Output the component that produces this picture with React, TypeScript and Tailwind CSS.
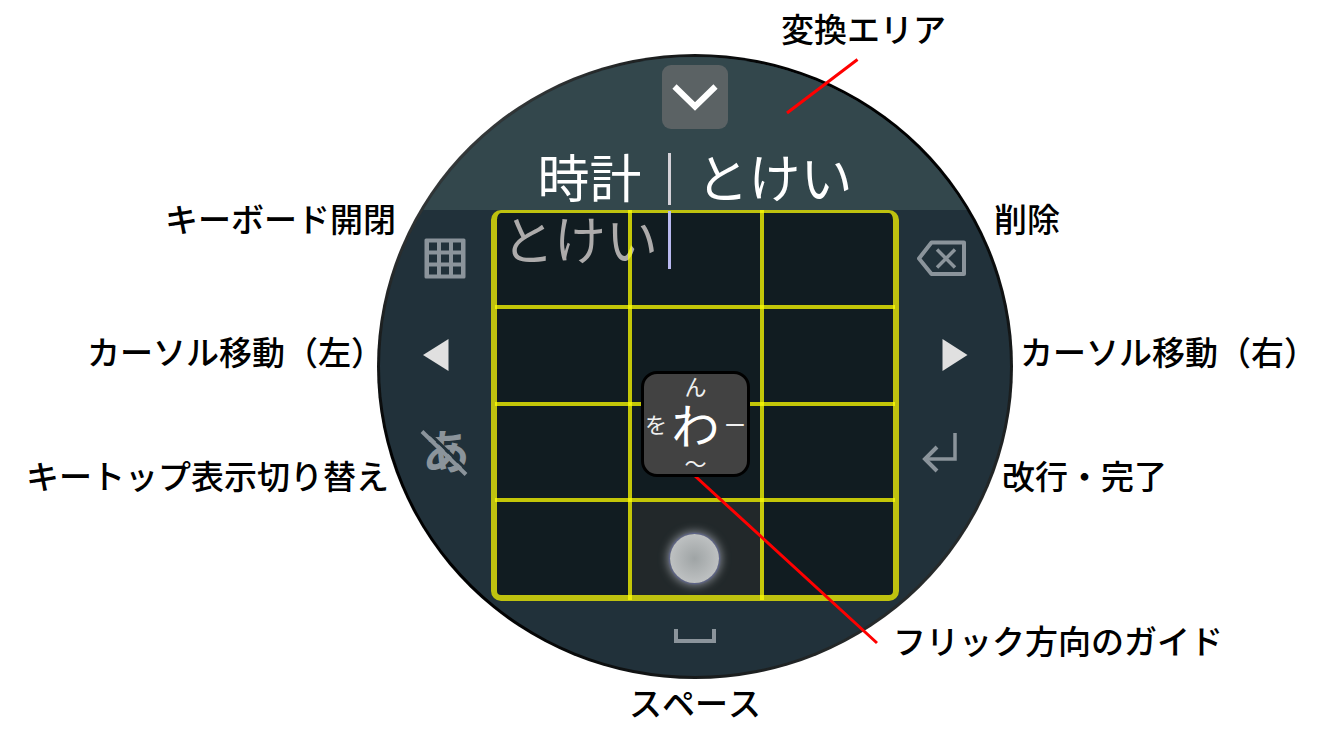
import type { ReactNode } from "react";

const KEYS = ["あ", "か", "さ", "た", "な", "は", "ま", "や", "ら", "記号", "わ", "句読点"];

const CALLOUTS = [
  { text: "変換エリア", place: "left-[404px] -top-[42px]" },
  { text: "キーボード開閉", place: "right-[617px] top-[148px]" },
  { text: "カーソル移動（左）", place: "right-[629px] top-[281px]" },
  { text: "キートップ表示切り替え", place: "right-[624px] top-[405px]" },
  { text: "削除", place: "left-[617px] top-[148px]" },
  { text: "カーソル移動（右）", place: "left-[643px] top-[281px]" },
  { text: "改行・完了", place: "left-[625px] top-[405px]" },
  { text: "フリック方向のガイド", place: "left-[516px] top-[570px]" },
  { text: "スペース", place: "left-[252px] top-[632px]" },
];

function SideKey({ label, children }: { label: string; children: ReactNode }) {
  return (
    <button type="button" aria-label={label} className="flex h-[97px] items-center justify-center">
      {children}
    </button>
  );
}

function LeftKeys() {
  return (
    <div className="flex w-[111px] flex-col pl-[19px]">
      <SideKey label="キーボード開閉">
        <svg viewBox="409 223 72 72" className="size-[72px]" fill="none">
          <rect x="424.5" y="238.5" width="41" height="40" rx="1.5" fill="#8b949b" />
          <g fill="#21313a">
            {[242.5, 254.5, 266.5].map((y) =>
              [429, 441, 453].map((x) => <rect key={`${x}-${y}`} x={x} y={y} width="8" height="8" />),
            )}
          </g>
        </svg>
      </SideKey>
      <SideKey label="カーソル移動（左）">
        <svg viewBox="409 320 72 72" className="size-[72px]">
          <path d="M423 355L448.500 339V371Z" fill="#e0e0e0" />
        </svg>
      </SideKey>
      <SideKey label="キートップ表示切り替え">
        <svg viewBox="405 413 80 80" className="size-[80px]">
          <text x="446" y="469" textAnchor="middle" fontSize="47" fontWeight="700" fill="#8b949b">
            あ
          </text>
          <path d="M424 428L469 472" stroke="#21313a" strokeWidth="3" />
          <path d="M422 431.500L466 474.500" stroke="#8b949b" strokeWidth="4" />
        </svg>
      </SideKey>
    </div>
  );
}

function RightKeys() {
  return (
    <div className="flex w-[111px] flex-col pr-[25px]">
      <SideKey label="削除">
        <svg viewBox="906 223 72 72" className="size-[72px]" fill="none" stroke="#8b949b">
          <path d="M931.500 242.500H964V274H931.500L919 258.500Z" strokeWidth="4" strokeLinejoin="round" />
          <path d="M937 249.500L955 267.500M955 249.500L937 267.500" strokeWidth="3.500" />
        </svg>
      </SideKey>
      <SideKey label="カーソル移動（右）">
        <svg viewBox="906 320 72 72" className="size-[72px]">
          <path d="M942.500 339L967.500 355L942.500 371Z" fill="#e0e0e0" />
        </svg>
      </SideKey>
      <SideKey label="改行・完了">
        <svg viewBox="906 417 72 72" className="size-[72px]" fill="none" stroke="#8b949b">
          <path d="M955 433V459H925" strokeWidth="3.500" />
          <path d="M937 447L925 459L937 471" strokeWidth="4" />
        </svg>
      </SideKey>
    </div>
  );
}

function FlickGuide() {
  return (
    <div className="absolute left-[144px] top-[158px] z-20 grid h-[106px] w-[109px] grid-cols-[24px_1fr_24px] grid-rows-[22px_1fr_24px] place-items-center rounded-2xl border-[3px] border-black bg-[#424242] text-[22px] leading-[22px] text-[#f0f0f0]">
      <span className="col-start-2">ん</span>
      <span className="col-start-1 row-start-2">を</span>
      <span className="col-start-2 row-start-2 text-[48px] leading-[48px] text-white">わ</span>
      <span className="col-start-3 row-start-2">ー</span>
      <span className="col-start-2 row-start-3">～</span>
    </div>
  );
}

function Keypad() {
  return (
    <div className="relative h-[391px] w-[408px] rounded-[10px] border-x-[6px] border-b-[6px] border-t-[3px] border-[#bfc20f] bg-[#111c21]">
      <div className="absolute left-[5px] -top-[4px] flex items-end text-[52px] leading-[58px] text-[#adabab]">
        <span>とけい</span>
        <span className="ml-[10px] -mb-[2px] h-[58px] w-[3px] bg-[#b9b9f0]" />
      </div>
      <div className="grid h-full grid-cols-[135px_132px_1fr] grid-rows-[96px_97px_96px_1fr]">
        {KEYS.map((key) => (
          <button
            key={key}
            type="button"
            aria-label={key}
            className={key === "わ" ? "flex items-end justify-center bg-[#22282a] pr-[8px] pb-[12px]" : ""}
          >
            {key === "わ" && (
              <span className="size-[49px] rounded-full bg-radial from-[#9fa4a5] to-[#cbcdce] shadow-[0_0_2px_1px_#5d6496,0_0_9px_3px_#7c8086]" />
            )}
          </button>
        ))}
      </div>
      <div aria-hidden="true" className="pointer-events-none absolute inset-x-0 -top-[3px] -bottom-[5px] grid grid-cols-[135px_132px_1fr]">
        <span className="border-r-4 border-[#ffff00]/75" />
        <span className="border-r-4 border-[#ffff00]/75" />
      </div>
      <div aria-hidden="true" className="pointer-events-none absolute -inset-x-[2px] inset-y-0 grid grid-rows-[96px_97px_96px_1fr]">
        <span className="border-b-4 border-[#ffff00]/75" />
        <span className="border-b-4 border-[#ffff00]/75" />
        <span className="border-b-4 border-[#ffff00]/75" />
      </div>
      <FlickGuide />
    </div>
  );
}

function Watch() {
  return (
    <div className="rounded-[50%] bg-linear-135 from-[#3c4142] from-12% via-black via-40% to-[#303536] to-92% p-[3px]">
      <div className="flex h-[619px] flex-col overflow-hidden rounded-[50%] bg-[#21313a]">
        <header className="flex h-[153px] flex-col items-center bg-[#33474c] pt-[8px]">
          <button
            type="button"
            aria-label="閉じる"
            className="flex h-[64px] w-[66px] items-center justify-center rounded-[9px] bg-[#5b6264]"
          >
            <svg viewBox="0 0 66 64" className="h-[64px] w-[66px]" fill="none">
              <path d="M12.500 21.500L33 41.500L53.500 21.500" stroke="#fff" strokeWidth="6" />
            </svg>
          </button>
          <div className="mt-[18px] flex items-center gap-[26px] text-[52px] leading-[52px] text-white">
            <button type="button">時計</button>
            <span className="mt-[6px] h-[52px] w-[3px] bg-[#d5d2d8]" />
            <button type="button">とけい</button>
          </div>
        </header>
        <div className="flex">
          <LeftKeys />
          <Keypad />
          <RightKeys />
        </div>
        <button type="button" aria-label="スペース" className="flex h-[70px] items-center justify-center">
          <svg viewBox="0 0 42 14" className="h-[14px] w-[42px]" fill="none">
            <path d="M2 0V12H40V0" stroke="#8b949b" strokeWidth="4" />
          </svg>
        </button>
      </div>
    </div>
  );
}

export default function App() {
  return (
    <main
      lang="ja"
      className="flex min-h-screen justify-center bg-white pt-[54px] pl-[50px] font-['Noto_Sans_CJK_JP','Noto_Sans',sans-serif]"
    >
      <figure className="relative w-[636px]">
        <Watch />
        <svg aria-hidden="true" viewBox="377 54 636 625" className="pointer-events-none absolute left-0 top-0 h-[625px] w-[636px] overflow-visible">
          <path d="M857.500 59.500L787 113M695 476L877 643" stroke="#f00" strokeWidth="3" />
        </svg>
        <figcaption>
          {CALLOUTS.map(({ text, place }) => (
            <span
              key={text}
              className={`absolute whitespace-nowrap text-[33px] leading-[33px] font-medium text-black [font-kerning:none] ${place}`}
            >
              {text}
            </span>
          ))}
        </figcaption>
      </figure>
    </main>
  );
}
